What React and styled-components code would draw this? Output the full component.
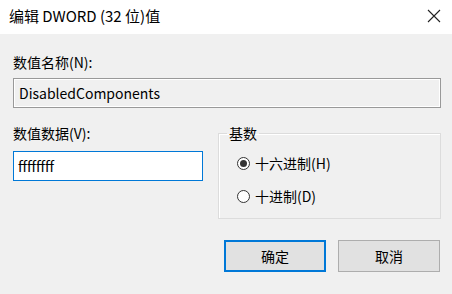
import React from 'react';
import styled, { createGlobalStyle } from 'styled-components';

const GlobalStyle = createGlobalStyle`
	html, body {
		margin: 0;
		padding: 0;
		background: #f0f0f0;
	}
	body {
		font-family: "Noto Sans CJK SC", "Noto Sans", sans-serif;
		color: #000000;
	}
`;

const Window = styled.div`
	width: 452px;
	height: 294px;
	display: flex;
	flex-direction: column;
	background: #f0f0f0;
	overflow: hidden;
`;

const TitleBar = styled.div`
	height: 34px;
	flex-shrink: 0;
	display: flex;
	align-items: center;
	justify-content: space-between;
	background: #ffffff;
	padding: 0 10px 0 9px;
`;

const Title = styled.div`
	font-size: 15px;
	line-height: 20px;
	margin-top: -2px;
`;

const CloseButton = styled.div`
	width: 16px;
	height: 16px;
	display: flex;
	align-items: center;
	justify-content: center;
	margin-top: -2px;
`;

const Body = styled.div`
	flex: 1;
	display: flex;
	flex-direction: column;
	padding: 18px 11px 0 13px;
`;

const Label = styled.div`
	font-size: 14px;
	line-height: 20px;
	height: 20px;
`;

const NameBox = styled.div`
	margin-top: 6px;
	height: 30px;
	box-sizing: border-box;
	border: 1px solid #999999;
	box-shadow: inset 0 0 0 1px #ffffff, inset 0 0 0 2px #f0f0f0;
	background: #f0f0f0;
	display: flex;
	align-items: center;
	padding-left: 5px;
	font-size: 14px;
`;

const Row = styled.div`
	display: flex;
	margin-top: 14px;
	gap: 15px;
`;

const LeftCol = styled.div`
	width: 190px;
	display: flex;
	flex-direction: column;
	padding-top: 1px;
`;

const DataBox = styled.div`
	margin-top: 8px;
	height: 30px;
	box-sizing: border-box;
	border: 1px solid #0078d7;
	background: #ffffff;
	display: flex;
	align-items: center;
	padding-left: 4px;
	font-size: 14px;
`;

const Group = styled.fieldset`
	flex: 1;
	margin: 2px 0 0 0;
	height: 95px;
	box-sizing: border-box;
	border: 1px solid #dcdcdc;
	box-shadow: inset 1px 1px 0 #ffffff;
	padding: 11px 0 0 8px;
`;

const Legend = styled.legend`
	font-size: 14px;
	line-height: 18px;
	padding: 0 2px;
`;

const RadioList = styled.div`
	display: flex;
	flex-direction: column;
	gap: 13px;
	padding-left: 10px;
`;

const RadioRow = styled.div`
	display: flex;
	align-items: center;
	gap: 5px;
	font-size: 14px;
	line-height: 20px;
`;

const RadioCircle = styled.span`
	width: 13px;
	height: 13px;
	box-sizing: border-box;
	border-radius: 50%;
	border: 1px solid #333333;
	background: #ffffff;
	display: flex;
	align-items: center;
	justify-content: center;
	&::after {
		content: '';
		width: 7px;
		height: 7px;
		border-radius: 50%;
		background: ${p => (p.checked ? '#333333' : 'transparent')};
	}
`;

const Buttons = styled.div`
	display: flex;
	justify-content: flex-end;
	gap: 12px;
	margin-top: 21px;
	padding-right: 1px;
`;

const Button = styled.div`
	width: 102px;
	height: 32px;
	box-sizing: border-box;
	background: #e1e1e1;
	border: ${p => (p.primary ? '2px solid #0078d7' : '1px solid #adadad')};
	display: flex;
	align-items: center;
	justify-content: center;
	font-size: 14px;
`;

export default function App() {
	return (
		<Window>
			<GlobalStyle />
			<TitleBar>
				<Title>编辑 DWORD (32 位)值</Title>
				<CloseButton>
					<svg width="14" height="14" viewBox="0 0 14 14">
						<path d="M1 1 L13 13 M13 1 L1 13" stroke="#222" strokeWidth="1.1" fill="none" />
					</svg>
				</CloseButton>
			</TitleBar>
			<Body>
				<Label>数值名称(N):</Label>
				<NameBox>DisabledComponents</NameBox>
				<Row>
					<LeftCol>
						<Label>数值数据(V):</Label>
						<DataBox>ffffffff</DataBox>
					</LeftCol>
					<Group>
						<Legend>基数</Legend>
						<RadioList>
							<RadioRow>
								<RadioCircle checked />
								十六进制(H)
							</RadioRow>
							<RadioRow>
								<RadioCircle />
								十进制(D)
							</RadioRow>
						</RadioList>
					</Group>
				</Row>
				<Buttons>
					<Button primary>确定</Button>
					<Button>取消</Button>
				</Buttons>
			</Body>
		</Window>
	);
}
